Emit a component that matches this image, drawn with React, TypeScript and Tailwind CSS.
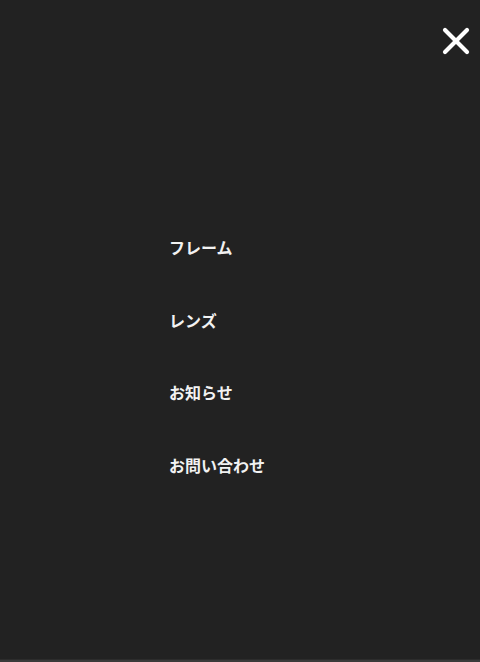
import { X } from "lucide-react";

const items = ["フレーム", "レンズ", "お知らせ", "お問い合わせ"];

export default function App() {
  return (
    <div className="min-h-[662px] bg-[#3a3a3a] font-['Noto_Sans_CJK_JP',sans-serif]">
      <div className="relative h-[660px] border-b border-[#2c2c2c] bg-[#222222]">
        <button className="absolute right-[2px] top-[19px] text-white" aria-label="close">
          <X className="size-11" strokeWidth={2.3} />
        </button>
        <nav className="flex flex-col gap-[48.5px] pl-[169px] pt-[235px]">
          {items.map((item) => (
            <a key={item} href="#" className="text-base font-bold leading-6 text-[#f2f2f2]">
              {item}
            </a>
          ))}
        </nav>
      </div>
    </div>
  );
}
